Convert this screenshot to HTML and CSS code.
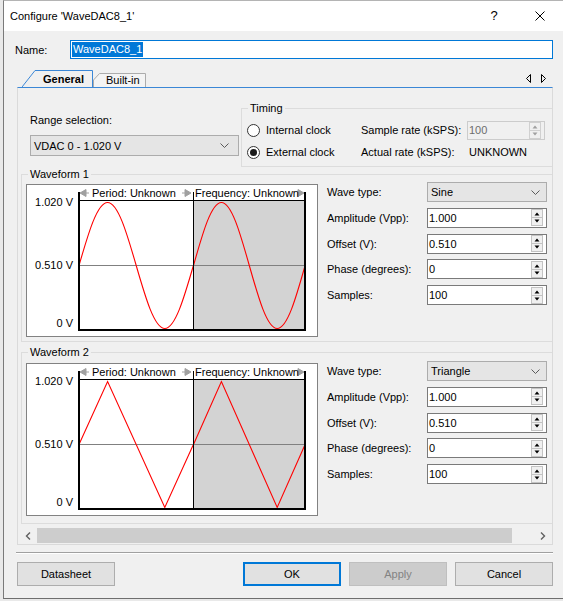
FILE: index.html
```html
<!DOCTYPE html>
<html lang="en">
<head>
<meta charset="UTF-8" />
<title>Configure 'WaveDAC8_1'</title>
<link rel="stylesheet" href="styles.css">
</head>
<body>

<svg class="defs" width="0" height="0">
  <symbol id="chev" viewBox="0 0 9 5"><polyline points="0.5,0.5 4.5,4.5 8.5,0.5" fill="none" stroke="#5a5a5a"/></symbol>
  <symbol id="spinbtn" viewBox="0 0 12 17">
    <rect x="0.5" y="0.5" width="11" height="16" fill="#f0f0f0" stroke="#c3c3c3"/>
    <line x1="1" y1="8.5" x2="11" y2="8.5" stroke="#c3c3c3"/>
    <path d="M3.5 6.5h5l-2.5-3z" fill="#000"/>
    <path d="M3.5 10.5h5l-2.5 3z" fill="#000"/>
  </symbol>
  <symbol id="spinbtn-off" viewBox="0 0 12 17">
    <rect x="0.5" y="0.5" width="11" height="16" fill="#f0f0f0" stroke="#d0d0d0"/>
    <line x1="1" y1="8.5" x2="11" y2="8.5" stroke="#d0d0d0"/>
    <path d="M3.5 6.5h5l-2.5-3z" fill="#a0a0a0"/>
    <path d="M3.5 10.5h5l-2.5 3z" fill="#a0a0a0"/>
  </symbol>
</svg>

<div class="window">
  <div class="titlebar">
    <span class="title">Configure 'WaveDAC8_1'</span>
    <span class="cap-btn help">?</span>
    <span class="cap-btn close"><svg width="10" height="10" viewBox="0 0 10 10"><path d="M0.5 0.5L9.5 9.5M9.5 0.5L0.5 9.5" stroke="#000" fill="none"/></svg></span>
  </div>

  <div class="name-row">
    <label>Name:</label>
    <div class="name-input"><span class="sel">WaveDAC8_1</span></div>
  </div>

  <div class="tabstrip">
    <div class="tab active">
      <svg class="tab-shape" width="71" height="17" viewBox="0 0 71 17"><path d="M0,17 L13,0.5 L70.5,0.5 L70.5,17" fill="#f0f0f0" stroke="#3b87d6"/></svg>
      <span>General</span>
    </div>
    <div class="tab other">
      <svg class="tab-shape" width="53" height="14" viewBox="0 0 53 14"><path d="M0.5,14 L0.5,7 L6.5,0.5 L52.5,0.5 L52.5,14" fill="#f4f4f4" stroke="#acacac"/></svg>
      <span>Built-in</span>
    </div>
    <svg class="tab-arrows" width="24" height="9" viewBox="0 0 24 9">
      <path d="M6.5,0.5 L2.5,4.5 L6.5,8.5 Z" fill="none" stroke="#000"/>
      <path d="M17.5,0.5 L21.5,4.5 L17.5,8.5 Z" fill="none" stroke="#000"/>
    </svg>
  </div>

  <div class="panel">
    <div class="top-row">
      <div class="range">
        <div>Range selection:</div>
        <div class="combo"><span>VDAC 0 - 1.020 V</span><svg class="chev" width="9" height="5"><use href="#chev"/></svg></div>
      </div>
      <fieldset class="group timing">
        <legend>Timing</legend>
        <div class="timing-grid">
          <div class="radio-opt"><span class="radio"></span>Internal clock</div>
          <div>Sample rate (kSPS):</div>
          <div class="spin disabled"><span>100</span><svg width="12" height="17"><use href="#spinbtn-off"/></svg></div>
          <div class="radio-opt"><span class="radio on"></span>External clock</div>
          <div>Actual rate (kSPS):</div>
          <div class="value">UNKNOWN</div>
        </div>
      </fieldset>
    </div>

    <fieldset class="group wave">
      <legend>Waveform 1</legend>
      <div class="wave-body">
        <div class="chart">
          <svg class="plot" width="290" height="151" viewBox="0 0 290 151">
            <rect x="167" y="16" width="110" height="128" fill="#d3d3d3"/>
            <line x1="52" y1="80.5" x2="278" y2="80.5" stroke="#808080"/>
            <path class="trace" d="M0,0 C0.3261,-0.5123 0.6381,-1 1,-1 S1.6739,-0.5123 2,0 S2.6381,1 3,1 S3.6739,0.5123 4,0" transform="translate(52 80.5) scale(28.6 63)"/>
            <path class="trace" d="M0,0 C0.3261,-0.5123 0.6381,-1 1,-1 S1.6739,-0.5123 2,0 S2.6381,1 3,1 S3.6739,0.5123 4,0" transform="translate(166.5 80.5) scale(27.9 63)"/>
            <line x1="52" y1="15.5" x2="278" y2="15.5" stroke="#000"/>
            <line x1="166.5" y1="7" x2="166.5" y2="144" stroke="#000"/>
            <path d="M52 7V146M278 7V146M51 145H279" stroke="#000" stroke-width="2" fill="none"/>
            <path d="M53 8L59 4.5V11.5ZM59 8H62M155 8H158M164 8L158 4.5V11.5ZM277 8L271 4.5V11.5Z" fill="#a0a0a0" stroke="#a0a0a0" stroke-width="1"/>
            <text x="65" y="12">Period: Unknown</text>
            <text x="168" y="12">Frequency: Unknown</text>
            <text x="46" y="21" text-anchor="end">1.020 V</text>
            <text x="46" y="84" text-anchor="end">0.510 V</text>
            <text x="46" y="142" text-anchor="end">0 V</text>
          </svg>
        </div>
        <div class="params">
          <div class="param"><span class="plabel">Wave type:</span><div class="combo"><span>Sine</span><svg class="chev" width="9" height="5"><use href="#chev"/></svg></div></div>
          <div class="param"><span class="plabel">Amplitude (Vpp):</span><div class="spin"><span>1.000</span><svg width="12" height="17"><use href="#spinbtn"/></svg></div></div>
          <div class="param"><span class="plabel">Offset (V):</span><div class="spin"><span>0.510</span><svg width="12" height="17"><use href="#spinbtn"/></svg></div></div>
          <div class="param"><span class="plabel">Phase (degrees):</span><div class="spin"><span>0</span><svg width="12" height="17"><use href="#spinbtn"/></svg></div></div>
          <div class="param"><span class="plabel">Samples:</span><div class="spin"><span>100</span><svg width="12" height="17"><use href="#spinbtn"/></svg></div></div>
        </div>
      </div>
    </fieldset>

    <fieldset class="group wave last">
      <legend>Waveform 2</legend>
      <div class="wave-body">
        <div class="chart">
          <svg class="plot" width="290" height="151" viewBox="0 0 290 151">
            <rect x="167" y="16" width="110" height="128" fill="#d3d3d3"/>
            <line x1="52" y1="80.5" x2="278" y2="80.5" stroke="#808080"/>
            <path class="trace" d="M0,0 L1,-1 L3,1 L4,0" transform="translate(52 80.5) scale(28.6 63)"/>
            <path class="trace" d="M0,0 L1,-1 L3,1 L4,0" transform="translate(166.5 80.5) scale(27.9 63)"/>
            <line x1="52" y1="15.5" x2="278" y2="15.5" stroke="#000"/>
            <line x1="166.5" y1="7" x2="166.5" y2="144" stroke="#000"/>
            <path d="M52 7V146M278 7V146M51 145H279" stroke="#000" stroke-width="2" fill="none"/>
            <path d="M53 8L59 4.5V11.5ZM59 8H62M155 8H158M164 8L158 4.5V11.5ZM277 8L271 4.5V11.5Z" fill="#a0a0a0" stroke="#a0a0a0" stroke-width="1"/>
            <text x="65" y="12">Period: Unknown</text>
            <text x="168" y="12">Frequency: Unknown</text>
            <text x="46" y="21" text-anchor="end">1.020 V</text>
            <text x="46" y="84" text-anchor="end">0.510 V</text>
            <text x="46" y="142" text-anchor="end">0 V</text>
          </svg>
        </div>
        <div class="params">
          <div class="param"><span class="plabel">Wave type:</span><div class="combo"><span>Triangle</span><svg class="chev" width="9" height="5"><use href="#chev"/></svg></div></div>
          <div class="param"><span class="plabel">Amplitude (Vpp):</span><div class="spin"><span>1.000</span><svg width="12" height="17"><use href="#spinbtn"/></svg></div></div>
          <div class="param"><span class="plabel">Offset (V):</span><div class="spin"><span>0.510</span><svg width="12" height="17"><use href="#spinbtn"/></svg></div></div>
          <div class="param"><span class="plabel">Phase (degrees):</span><div class="spin"><span>0</span><svg width="12" height="17"><use href="#spinbtn"/></svg></div></div>
          <div class="param"><span class="plabel">Samples:</span><div class="spin"><span>100</span><svg width="12" height="17"><use href="#spinbtn"/></svg></div></div>
        </div>
      </div>
    </fieldset>

    <div class="hscroll">
      <span class="sb-btn"><svg width="6" height="8" viewBox="0 0 6 8"><polyline points="5,0.5 1.5,4 5,7.5" fill="none" stroke="#606060" stroke-width="1.4"/></svg></span>
      <div class="sb-track"><div class="sb-thumb"></div></div>
      <span class="sb-btn"><svg width="6" height="8" viewBox="0 0 6 8"><polyline points="1,0.5 4.5,4 1,7.5" fill="none" stroke="#606060" stroke-width="1.4"/></svg></span>
    </div>
  </div>

  <div class="separator"></div>

  <div class="buttons">
    <button class="datasheet">Datasheet</button>
    <button class="default">OK</button>
    <button disabled>Apply</button>
    <button>Cancel</button>
  </div>
</div>

</body>
</html>
```

FILE: styles.css
```css
* { box-sizing: border-box; }
html { background: #e9e9e9; }
body { margin: 0; font-family: "Liberation Sans", Arial, sans-serif; font-size: 11px; line-height: 14px; color: #000; }
.defs { position: absolute; width: 0; height: 0; }

.window { margin-left: 3px; width: 560px; height: 599px; border-left: 1px solid #7a7a7a; border-top: 1px solid #b4b4b4; border-bottom: 1px solid #6e6e6e; background: #f0f0f0; display: flex; flex-direction: column; overflow: hidden; }

.titlebar { height: 30px; flex-shrink: 0; background: #fff; display: flex; align-items: center; }
.title { flex: 1; padding-left: 6px; font-size: 11px; }
.cap-btn { width: 46px; height: 30px; display: flex; align-items: center; justify-content: center; }
.help { font-size: 13px; }

.name-row { display: flex; align-items: center; height: 19px; margin-top: 9px; padding: 0 10px 0 11px; flex-shrink: 0; }
.name-row label { width: 55px; }
.name-input { flex: 1; height: 19px; border: 1px solid #0078d7; background: #fff; padding-left: 1px; display: flex; align-items: center; }
.sel { background: #0078d7; color: #fff; padding: 0 1px; line-height: 15px; }

.tabstrip { display: flex; align-items: flex-end; height: 17px; margin: 11px 10px 0 13px; flex-shrink: 0; }
.tab { position: relative; }
.tab span { position: relative; }
.tab-shape { position: absolute; left: 0; top: 0; }
.tab.active { width: 71px; height: 17px; margin-left: 5px; padding: 2px 0 0 21px; font-weight: bold; }
.tab.other { width: 53px; height: 14px; padding-left: 13px; }
.tab-arrows { margin: 4px 5px 0 auto; align-self: flex-start; }

.panel { height: 458px; margin: 0 10px 0 13px; border: 1px solid #dadada; border-top-color: #3b87d6; display: flex; flex-direction: column; overflow: hidden; flex-shrink: 0; }

.top-row { display: flex; align-items: flex-start; flex-shrink: 0; }
.range { width: 209px; margin: 25px 0 0 12px; flex-shrink: 0; }
.range .combo { margin-top: 8px; height: 21px; padding-right: 9px; }

.combo { display: flex; align-items: center; justify-content: space-between; background: #e5e5e5; border: 1px solid #acacac; padding: 0 6px 0 3px; }
.chev { display: block; }

.group { margin: 0; padding: 0; border: 1px solid #dcdcdc; min-width: 0; flex-shrink: 0; }
.group legend { padding: 0 2px; margin-left: 6px; line-height: 14px; }

.timing { width: 330px; margin: 13px 0 0 2px; }
.timing-grid { display: grid; grid-template-columns: 114px 106px 78px; grid-auto-rows: 22px; align-items: center; padding: 4px 0 3px 5px; }
.radio-opt { display: flex; align-items: center; gap: 6px; }
.radio { width: 13px; height: 13px; border: 1px solid #333; border-radius: 50%; background: #fff; display: flex; align-items: center; justify-content: center; }
.radio.on::after { content: ""; width: 7px; height: 7px; border-radius: 50%; background: #1a1a1a; }
.value { padding-left: 2px; }

.spin { height: 19px; display: flex; align-items: center; justify-content: space-between; background: #fff; border: 1px solid #7a7a7a; padding: 0 3px 0 1px; }
.spin svg { display: block; }
.spin.disabled { background: #f0f0f0; border-color: #cccccc; color: #6d6d6d; }

.wave { width: 560px; margin-left: 3px; }
.wave.last { margin-top: 3px; }
.wave-body { display: flex; align-items: flex-start; padding: 3px 0 4px 4px; }
.wave.last .wave-body { padding: 4px 0 7px 4px; }
.chart { width: 292px; height: 153px; border: 1px solid #828282; background: #fff; flex-shrink: 0; }
.plot { display: block; }
.plot text { font-family: "Liberation Sans", Arial, sans-serif; font-size: 11px; fill: #000; }
.trace { fill: none; stroke: #ff0000; stroke-width: 1.1; vector-effect: non-scaling-stroke; }

.params { display: flex; flex-direction: column; gap: 5.75px; margin: -2px 0 0 9px; }
.param { display: flex; align-items: center; height: 20px; }
.plabel { width: 100px; }
.param .combo, .param .spin { width: 120px; height: 20px; }

.hscroll { margin-top: auto; height: 17px; display: flex; align-items: center; flex-shrink: 0; }
.sb-btn { width: 19px; height: 17px; display: flex; align-items: center; justify-content: center; }
.sb-track { flex: 1; padding-right: 21px; }
.sb-thumb { height: 15px; background: #cdcdcd; }

.separator { height: 2px; margin: 7px 10px 0 12px; border-top: 1px solid #a0a0a0; border-bottom: 1px solid #fff; flex-shrink: 0; }

.buttons { display: flex; gap: 8px; margin: 8px 10px 0 13px; flex-shrink: 0; }
.buttons button { width: 98px; height: 24px; font: inherit; color: #000; background: #e1e1e1; border: 1px solid #adadad; padding: 0; }
.buttons .datasheet { margin-right: auto; }
.buttons .default { border: 2px solid #0078d7; }
.buttons button:disabled { background: #cccccc; border-color: #bfbfbf; color: #838383; }
```
